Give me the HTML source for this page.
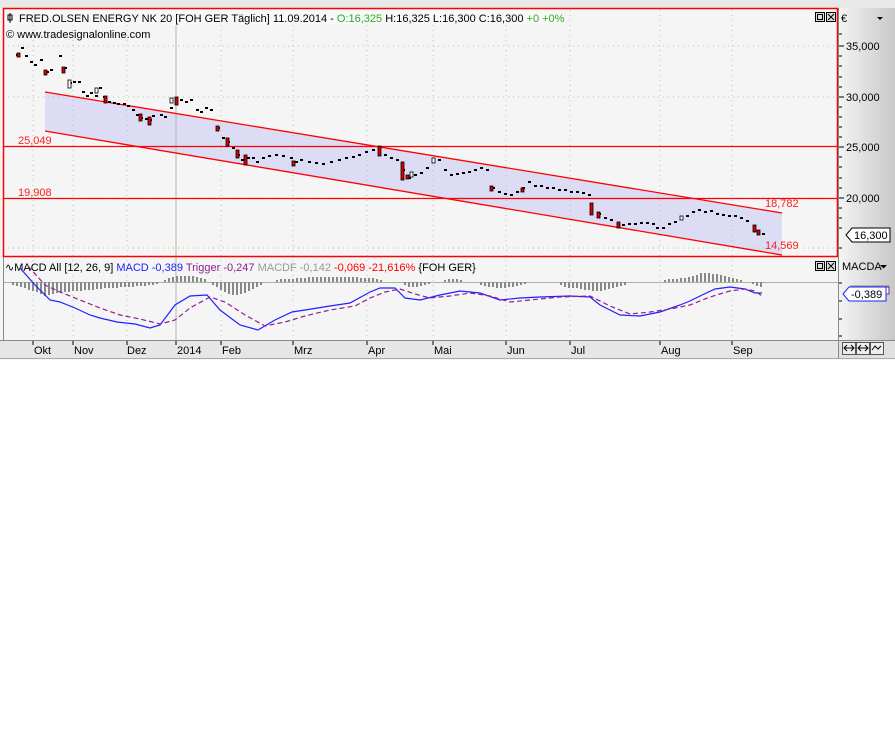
<!DOCTYPE html>
<html><head><meta charset="utf-8"><style>
html,body{margin:0;padding:0;background:#fff;width:895px;height:734px;overflow:hidden}
svg{display:block;font-family:"Liberation Sans",sans-serif}
</style></head><body>
<svg width="895" height="734" viewBox="0 0 895 734" xmlns="http://www.w3.org/2000/svg">
<defs>
<linearGradient id="rg" x1="0" x2="1"><stop offset="0" stop-color="#f4f4f4"/><stop offset="1" stop-color="#c8c8c8"/></linearGradient>
</defs>
<rect x="0" y="0" width="895" height="360" fill="#f5f5f5"/>
<rect x="0" y="0" width="895" height="8" fill="#e8e8e8"/>
<rect x="838" y="8" width="57" height="332" fill="url(#rg)"/>
<rect x="0" y="340" width="838" height="19" fill="#e6e6e6"/>
<rect x="838" y="340" width="57" height="19" fill="#e0e0e0"/>
<line x1="0" y1="340.5" x2="895" y2="340.5" stroke="#888"/>
<line x1="0" y1="358.5" x2="895" y2="358.5" stroke="#aaa"/>
<!-- channel -->
<polygon points="45,92 782,213 782,255 45,131" fill="#dcdcf4"/>
<!-- grid -->
<g stroke="#b0c8b0" stroke-dasharray="1,4">
<line x1="33" y1="10" x2="33" y2="340"/><line x1="73" y1="10" x2="73" y2="340"/><line x1="127" y1="10" x2="127" y2="340"/>
<line x1="221" y1="10" x2="221" y2="340"/><line x1="293" y1="10" x2="293" y2="340"/><line x1="367" y1="10" x2="367" y2="340"/>
<line x1="433" y1="10" x2="433" y2="340"/><line x1="506" y1="10" x2="506" y2="340"/><line x1="570" y1="10" x2="570" y2="340"/>
<line x1="660" y1="10" x2="660" y2="340"/><line x1="732" y1="10" x2="732" y2="340"/>
<line x1="3" y1="46" x2="838" y2="46"/><line x1="3" y1="97" x2="838" y2="97"/><line x1="3" y1="198" x2="838" y2="198"/><line x1="3" y1="248" x2="838" y2="248"/>
</g>
<line x1="176" y1="10" x2="176" y2="340" stroke="#a8c0a8"/>
<!-- red lines -->
<g stroke="#ff0000" stroke-width="1.3" fill="none">
<line x1="45" y1="92" x2="782" y2="213"/><line x1="45" y1="131" x2="782" y2="255"/>
<line x1="3" y1="146.5" x2="838" y2="146.5"/><line x1="3" y1="198.5" x2="838" y2="198.5"/>
<rect x="3.5" y="8.5" width="834" height="248" stroke-width="1.5"/>
</g>
<g fill="#ff2020" font-size="11">
<text x="18" y="144">25,049</text><text x="18" y="196">19,908</text>
<text x="765" y="207">18,782</text><text x="765" y="249">14,569</text>
</g>
<!-- candles -->
<path fill="none" stroke="#000" stroke-width="2" d="M16 55h3M21 48h3M25 56h3M30 62h3M34 65h3M40 60h3M46 72h3M50 70h3M59 56h3M64 68h3M69 83h3M73 82h3M78 82h3M82 92h3M86 96h3M90 93h3M95 96h3M99 88h3M103 97h3M108 102h3M113 103h3M117 104h3M123 104h3M127 106h3M132 110h3M136 115h3M140 118h3M145 119h3M149 120h3M152 116h3M160 115h3M164 117h3M170 108h3M175 100h3M180 100h3M185 102h3M190 100h3M196 110h3M200 112h3M205 108h3M210 110h3M217 128h3M222 138h3M227 142h3M232 148h3M237 155h3M241 160h3M247 158h3M252 158h3M256 162h3M262 158h3M268 156h3M275 155h3M282 156h3M290 158h3M295 162h3M300 160h3M308 162h3M315 163h3M322 164h3M330 162h3M338 160h3M345 158h3M352 157h3M358 155h3M365 152h3M372 150h3M378 150h3M384 155h3M390 158h3M396 160h3M402 170h3M408 178h3M414 175h3M420 173h3M426 168h3M432 162h3M438 160h3M444 170h3M450 175h3M456 174h3M462 173h3M468 172h3M474 170h3M480 168h3M486 170h3M492 188h3M498 192h3M504 194h3M510 195h3M516 192h3M522 188h3M528 182h3M534 186h3M540 186h3M546 188h3M552 188h3M558 190h3M564 190h3M570 192h3M576 192h3M582 193h3M588 195h3M598 214h3M604 218h3M610 220h3M622 225h3M628 224h3M634 224h3M640 223h3M646 223h3M652 224h3M656 228h3M662 228h3M668 224h3M674 222h3M680 218h3M686 216h3M692 212h3M698 210h3M704 212h3M710 211h3M716 214h3M722 215h3M728 216h3M734 216h3M740 218h3M746 221h3M762 234h3"/>
<g fill="#d00" stroke="#000" stroke-width="0.8">
<rect x="17" y="53" width="3" height="4"/><rect x="44" y="70" width="3" height="5"/><rect x="62" y="67" width="3" height="6"/>
<rect x="104" y="96" width="3" height="7"/><rect x="139" y="114" width="3" height="7"/><rect x="148" y="117" width="3" height="8"/>
<rect x="175" y="97" width="3" height="8"/><rect x="216" y="126" width="3" height="5"/><rect x="226" y="138" width="3" height="8"/>
<rect x="236" y="150" width="3" height="8"/><rect x="244" y="155" width="3" height="10"/><rect x="292" y="161" width="3" height="5"/>
<rect x="378" y="146" width="3" height="10"/><rect x="401" y="162" width="3" height="18"/><rect x="406" y="175" width="3" height="4"/>
<rect x="490" y="186" width="3" height="5"/><rect x="521" y="188" width="3" height="4"/><rect x="590" y="203" width="3" height="12"/>
<rect x="597" y="212" width="3" height="6"/><rect x="617" y="222" width="3" height="6"/><rect x="753" y="225" width="3" height="7"/><rect x="757" y="230" width="3" height="5"/>
</g>
<g fill="#fff" stroke="#000" stroke-width="0.8">
<rect x="68" y="80" width="3" height="8"/><rect x="95" y="88" width="3" height="5"/><rect x="170" y="98" width="3" height="5"/>
<rect x="410" y="172" width="3" height="5"/><rect x="432" y="158" width="3" height="5"/><rect x="680" y="216" width="3" height="4"/>
</g>
<!-- header -->
<rect x="5" y="10" width="555" height="15" fill="#f8f8f8"/>
<g font-size="11">
<path d="M10 13v10M8 15h4v5h-4z" stroke="#000" fill="none"/>
<text x="19" y="22" fill="#000">FRED.OLSEN ENERGY   NK 20 [FOH GER  Täglich] 11.09.2014 - <tspan fill="#2ab02a">O:16,325</tspan> H:16,325 L:16,300 C:16,300 <tspan fill="#2ab02a">+0 +0%</tspan></text>
<text x="6" y="38" fill="#000">© www.tradesignalonline.com</text>
</g>
<g stroke="#000" fill="#ddd"><rect x="815.5" y="12.5" width="9" height="9"/><rect x="826.5" y="12.5" width="9" height="9"/><rect x="815.5" y="261.5" width="9" height="9"/><rect x="826.5" y="261.5" width="9" height="9"/></g>
<g stroke="#000" fill="none"><rect x="817.5" y="14.5" width="5" height="5"/><path d="M828 14l6 6M834 14l-6 6"/><rect x="817.5" y="263.5" width="5" height="5"/><path d="M828 263l6 6M834 263l-6 6"/></g>
<!-- right axis -->
<line x1="838.5" y1="8" x2="838.5" y2="358" stroke="#888"/>
<g font-size="11" fill="#000">
<text x="841" y="22">€</text><path d="M877 17h6l-3 3z"/>
<text x="846" y="50">35,000</text><text x="846" y="101">30,000</text><text x="846" y="151">25,000</text><text x="846" y="202">20,000</text>
<text x="842" y="270">MACDA</text><path d="M880 265h7l-3.5 3.5z"/>
</g>
<g stroke="#000"><path d="M839 34h3M839 46h5M839 56h3M839 66h3M839 77h3M839 87h3M839 97h5M839 107h3M839 117h3M839 127h3M839 137h3M839 147h5M839 157h3M839 167h3M839 178h3M839 188h3M839 198h5M839 208h3M839 218h3M839 228h3M839 248h3M839 283h3M839 301h3M839 319h3M839 336h3"/></g>
<path d="M846 235l6-7h38v14h-38z" fill="#fff" stroke="#000"/><text x="854" y="239" font-size="11">16,300</text>
<path d="M846 291l5-5h38v6h-38z" fill="#fff" stroke="#888"/>
<path d="M846 293l5-6h38v7h-38z" fill="#fff" stroke="#802080"/>
<path d="M843 294l6-7h37v14h-37z" fill="#fff" stroke="#2020ff"/><text x="851" y="298" font-size="11">-0,389</text>
<g stroke="#555" fill="#eee"><rect x="842.5" y="342.5" width="13" height="12"/><rect x="856.5" y="342.5" width="13" height="12"/><rect x="870.5" y="342.5" width="13" height="12"/></g>
<path d="M844 348h10M847 345l-3 3 3 3M851 345l3 3-3 3M858 348h10M861 345l-3 3 3 3M865 345l3 3-3 3M872 350l3-4 3 3 3-3" stroke="#000" fill="none"/>
<!-- MACD panel -->
<line x1="3" y1="282.5" x2="838" y2="282.5" stroke="#a0b8a0"/>
<text x="5" y="271" font-size="11"><tspan fill="#000">∿MACD All [12, 26, 9] </tspan><tspan fill="#2020ff">MACD -0,389 </tspan><tspan fill="#902090">Trigger -0,247 </tspan><tspan fill="#999">MACDF -0,142 </tspan><tspan fill="#f00">-0,069 -21,616% </tspan><tspan fill="#000">{FOH GER}</tspan></text>
<path stroke="#888" stroke-width="2" fill="none" d="M13 282v3M17 282v4M21 282v5M25 282v6M29 282v8M33 282v9M37 282v10M41 282v12M45 282v14M49 282v13M53 282v12M57 282v11M61 282v11M65 282v10M69 282v10M73 282v9M77 282v9M81 282v9M85 282v8M89 282v8M93 282v8M97 282v7M101 282v7M105 282v6M109 282v6M113 282v6M117 282v6M121 282v5M125 282v5M129 282v5M133 282v5M137 282v4M141 282v4M145 282v4M149 282v3M153 282v3M157 282v2M165 282v-2M169 282v-4M173 282v-5M177 282v-6M181 282v-6M185 282v-6M189 282v-6M193 282v-6M197 282v-5M201 282v-4M205 282v-3M213 282v3M217 282v5M221 282v8M225 282v10M229 282v12M233 282v13M237 282v13M241 282v12M245 282v11M249 282v9M253 282v7M257 282v5M261 282v3M277 282v-2M281 282v-3M285 282v-3M289 282v-3M293 282v-3M297 282v-4M301 282v-4M305 282v-4M309 282v-5M313 282v-5M317 282v-5M321 282v-5M325 282v-5M329 282v-5M333 282v-5M337 282v-5M341 282v-5M345 282v-5M349 282v-5M353 282v-5M357 282v-5M361 282v-4M365 282v-4M369 282v-4M373 282v-4M377 282v-3M381 282v-2M405 282v3M409 282v5M413 282v5M417 282v5M421 282v4M425 282v3M429 282v2M445 282v-2M449 282v-3M453 282v-3M457 282v-3M461 282v-2M481 282v3M485 282v4M489 282v5M493 282v5M497 282v6M501 282v6M505 282v6M509 282v5M513 282v5M517 282v4M521 282v3M525 282v2M561 282v3M565 282v5M569 282v6M573 282v6M577 282v6M581 282v7M585 282v8M589 282v8M593 282v9M597 282v9M601 282v9M605 282v8M609 282v7M613 282v6M617 282v5M621 282v4M625 282v3M665 282v-2M669 282v-3M673 282v-3M677 282v-3M681 282v-4M685 282v-4M689 282v-5M693 282v-6M697 282v-7M701 282v-9M705 282v-9M709 282v-9M713 282v-8M717 282v-8M721 282v-7M725 282v-6M729 282v-5M733 282v-4M737 282v-3M741 282v-2M753 282v2M757 282v4M761 282v5"/>
<polyline fill="none" stroke="#2020ff" stroke-width="1.2" points="20,268 35,285 50,300 60,302 75,308 90,315 100,318 117,322 135,324 150,328 160,325 175,305 190,296 207,295 220,310 240,325 258,330 275,320 292,312 305,310 330,306 350,303 370,292 380,288 395,288 405,298 420,300 440,295 460,291 480,293 500,300 520,298 540,297 570,296 590,297 600,305 620,315 640,316 660,312 680,305 690,301 700,296 715,289 730,287 745,289 755,293 762,293"/>
<polyline fill="none" stroke="#902090" stroke-width="1.2" stroke-dasharray="5,3" points="28,266 45,285 60,292 80,300 100,308 120,315 140,319 160,324 175,320 190,308 210,297 225,302 245,315 265,326 285,322 305,316 330,310 355,306 370,298 385,292 400,289 415,294 430,298 450,296 470,293 490,296 510,302 530,300 560,297 590,296 610,306 630,314 650,312 670,309 690,305 710,297 730,291 745,289 755,291 762,296"/>
<!-- date axis -->
<g stroke="#000"><path d="M33 341v4M73 341v4M127 341v4M176 341v4M221 341v4M293 341v4M367 341v4M433 341v4M506 341v4M570 341v4M660 341v4M732 341v4"/></g>
<g font-size="11" fill="#000">
<text x="34" y="354">Okt</text><text x="74" y="354">Nov</text><text x="127" y="354">Dez</text><text x="177" y="354">2014</text>
<text x="222" y="354">Feb</text><text x="294" y="354">Mrz</text><text x="368" y="354">Apr</text><text x="434" y="354">Mai</text>
<text x="507" y="354">Jun</text><text x="571" y="354">Jul</text><text x="661" y="354">Aug</text><text x="733" y="354">Sep</text>
</g>
<line x1="3.5" y1="257" x2="3.5" y2="340" stroke="#888"/>
</svg>
</body></html>
